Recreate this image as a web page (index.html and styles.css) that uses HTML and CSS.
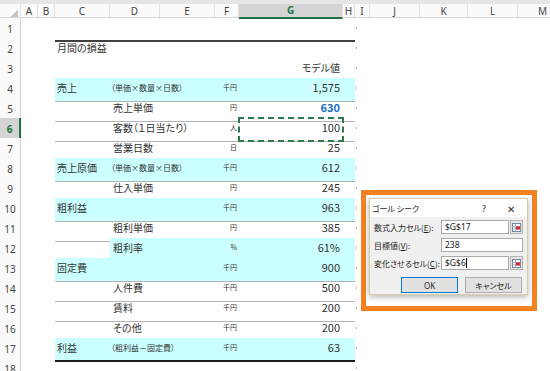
FILE: index.html
```html
<!DOCTYPE html>
<html>
<head>
  <meta charset="UTF-8" />
  <title>月間の損益 - ゴール シーク</title>
  <link rel="stylesheet" href="styles.css">
</head>
<body>
  <div class="topbar"></div>

  <!-- column headers -->
  <div class="colhead">
    <div class="corner"></div>
    <div>A</div><div>B</div><div>C</div><div>D</div><div>E</div><div>F</div>
    <div class="sel">G</div><div>H</div><div>I</div><div>J</div><div>K</div><div>L</div><div>M</div>
  </div>

  <div class="sheet">
    <div class="r"><div class="rh">1</div><div></div><div class="band rule"></div><div class="pb"></div></div>
    <div class="r"><div class="rh">2</div><div></div>
      <div class="band"><span class="c">月間の損益</span></div><div class="pb"></div></div>
    <div class="r"><div class="rh">3</div><div></div>
      <div class="band"><span class="c"></span><span class="d"></span><span class="f"></span><span class="g label">モデル値</span></div><div class="pb"></div></div>
    <div class="r"><div class="rh">4</div><div></div>
      <div class="band cyan line"><span class="c">売上</span><span class="d note">（単価×数量×日数）</span><span class="f">千円</span><span class="g">1,575</span></div><div class="pb"></div></div>
    <div class="r"><div class="rh">5</div><div></div>
      <div class="band line"><span class="c"></span><span class="d">売上単価</span><span class="f">円</span><span class="g input">630</span></div><div class="pb"></div></div>
    <div class="r"><div class="rh on">6</div><div></div>
      <div class="band line"><span class="c"></span><span class="d">客数（１日当たり）</span><span class="f">人</span><span class="g ants">100</span></div><div class="pb"></div></div>
    <div class="r"><div class="rh">7</div><div></div>
      <div class="band line"><span class="c"></span><span class="d">営業日数</span><span class="f">日</span><span class="g">25</span></div><div class="pb"></div></div>
    <div class="r"><div class="rh">8</div><div></div>
      <div class="band cyan line"><span class="c">売上原価</span><span class="d note">（単価×数量×日数）</span><span class="f">千円</span><span class="g">612</span></div><div class="pb"></div></div>
    <div class="r"><div class="rh">9</div><div></div>
      <div class="band line"><span class="c"></span><span class="d">仕入単価</span><span class="f">円</span><span class="g">245</span></div><div class="pb"></div></div>
    <div class="r"><div class="rh">10</div><div></div>
      <div class="band cyan line"><span class="c">粗利益</span><span class="d"></span><span class="f">千円</span><span class="g">963</span></div><div class="pb"></div></div>
    <div class="r"><div class="rh">11</div><div></div>
      <div class="band line"><span class="c"></span><span class="d">粗利単価</span><span class="f">円</span><span class="g">385</span></div><div class="pb"></div></div>
    <div class="r"><div class="rh">12</div><div></div>
      <div class="band cyan-d line"><span class="c"></span><span class="d">粗利率</span><span class="f">%</span><span class="g">61%</span></div><div class="pb"></div></div>
    <div class="r"><div class="rh">13</div><div></div>
      <div class="band cyan line"><span class="c">固定費</span><span class="d"></span><span class="f">千円</span><span class="g">900</span></div><div class="pb"></div></div>
    <div class="r"><div class="rh">14</div><div></div>
      <div class="band line"><span class="c"></span><span class="d">人件費</span><span class="f">千円</span><span class="g">500</span></div><div class="pb"></div></div>
    <div class="r"><div class="rh">15</div><div></div>
      <div class="band line"><span class="c"></span><span class="d">賃料</span><span class="f">千円</span><span class="g">200</span></div><div class="pb"></div></div>
    <div class="r"><div class="rh">16</div><div></div>
      <div class="band line"><span class="c"></span><span class="d">その他</span><span class="f">千円</span><span class="g">200</span></div><div class="pb"></div></div>
    <div class="r"><div class="rh">17</div><div></div>
      <div class="band cyan total"><span class="c">利益</span><span class="d note">（粗利益－固定費）</span><span class="f">千円</span><span class="g">63</span></div><div class="pb"></div></div>
    <div class="r"><div class="rh">18</div><div></div><div class="band"></div><div class="pb"></div></div>
  </div>

  <!-- goal seek dialog, highlighted -->
  <div class="callout">
    <div class="dialog">
      <div class="dlg-title">
        <span>ゴール シーク</span>
        <span class="q">?</span>
        <span class="x">✕</span>
      </div>
      <div class="dlg-body">
        <div class="fields">
          <label>数式入力セル(<u>E</u>):</label>
          <div class="box">$G$17</div>
          <div class="pick">
            <svg width="9" height="9" viewBox="0 0 9 9">
              <rect x="0.5" y="0.5" width="8" height="8" fill="#fff" stroke="#6f86a8"/>
              <path d="M0.5 3.5H8.5M0.5 6H8.5M3.5 0.5V8.5" stroke="#9fb0c8" stroke-width="1"/>
              <rect x="4" y="3.5" width="4" height="3" fill="#d8262a"/>
            </svg>
          </div>

          <label>目標値(<u>V</u>):</label>
          <div class="box wide">238</div>

          <label>変化させるセル(<u>C</u>):</label>
          <div class="box">$G$6<span class="caret"></span></div>
          <div class="pick">
            <svg width="9" height="9" viewBox="0 0 9 9">
              <rect x="0.5" y="0.5" width="8" height="8" fill="#fff" stroke="#6f86a8"/>
              <path d="M0.5 3.5H8.5M0.5 6H8.5M3.5 0.5V8.5" stroke="#9fb0c8" stroke-width="1"/>
              <rect x="4" y="3.5" width="4" height="3" fill="#d8262a"/>
            </svg>
          </div>
        </div>
        <div class="buttons">
          <button class="btn default">OK</button>
          <button class="btn">キャンセル</button>
        </div>
      </div>
    </div>
  </div>
</body>
</html>
```

FILE: styles.css
```css
* {
  box-sizing: border-box;
}
body {
  margin: 0;
  width: 550px;
  height: 371px;
  overflow: hidden;
  position: relative;
  background: #fff;
  color: #333;
  font-family: "Noto Sans CJK JP", "Noto Sans", sans-serif;
  font-feature-settings: "palt";
}
.topbar {
  height: 4px;
  background: #e6e6e6;
}

/* column headers */
.colhead {
  display: grid;
  grid-template-columns: 21px 17px 17px 55px 50px 55px 24px 104px 12px 15px 50px 48px 50px 50px;
  height: 14px;
  border-bottom: 1px solid #d5d5d5;
  background: #fafafa;
  font-family: "Noto Sans", sans-serif;
  font-size: 10px;
  color: #444;
}
.colhead div {
  border-right: 1px solid #e1e1e1;
  text-align: center;
  line-height: 15px;
}
.colhead .corner {
  background: linear-gradient(to bottom right, transparent 52%, #c4c4c4 52%) no-repeat right 2px bottom 2px / 8px 8px;
}
.colhead .sel {
  background: #d4d4d4;
  color: #217346;
  font-weight: bold;
  border-bottom: 2px solid #217346;
  line-height: 13px;
}

/* sheet rows */
.r {
  display: grid;
  grid-template-columns: 21px 34px 300px 1fr;
  height: 20px;
}
.rh {
  border-right: 1px solid #d5d5d5;
  border-bottom: 1px solid #e8e8e8;
  background: #fafafa;
  text-align: center;
  font-family: "Noto Sans", sans-serif;
  font-size: 10px;
  line-height: 23px;
  color: #444;
}
.rh.on {
  background: #d4d4d4;
  color: #217346;
  font-weight: bold;
  border-right: 2px solid #217346;
}
.pb {
  background: linear-gradient(#b0b0b0, #b0b0b0) no-repeat 1px 9px / 1px 2px;
}

.band {
  display: grid;
  grid-template-columns: 55px 105px 24px 104px 12px;
  white-space: nowrap;
  font-size: 10px;
  line-height: 19px;
}
.band.line {
  border-bottom: 1px solid #b4b4b4;
}
.band.cyan {
  background: #ccffff;
}
.band.cyan-d {
  background: linear-gradient(to right, transparent 55px, #ccffff 55px);
}
.band.rule {
  border-bottom: 2px solid #404040;
}
.band.total {
  border-bottom: 2px solid #1a1a1a;
}
.c {
  padding-left: 2px;
}
.d {
  padding-left: 3px;
}
.note {
  font-size: 8px;
  padding-left: 1px;
}
.f {
  text-align: right;
  padding-right: 2px;
  font-size: 7px;
}
.g {
  text-align: right;
  padding-right: 3px;
  font-size: 11px;
}
.g.label {
  font-size: 10px;
}
.g.input {
  color: #1470c8;
  font-weight: bold;
}
.g.ants {
  outline: 2px dashed #2b7a4b;
  outline-offset: -1px;
}

/* goal seek dialog */
.callout {
  position: absolute;
  left: 361px;
  top: 190px;
  width: 176px;
  height: 121px;
  border: 5px solid #f58220;
  background: #fff;
  padding: 3px 0 0 3px;
}
.dialog {
  width: 159px;
  height: 97px;
  border: 1px solid #d6cca6;
  background: #f0f0f0;
  box-shadow: 0 2px 6px rgba(0, 0, 0, 0.3);
  font-size: 8px;
  color: #1e1e1e;
}
.dlg-title {
  height: 18px;
  background: #fff;
  display: flex;
  align-items: center;
  padding-left: 2px;
}
.dlg-title .q {
  margin-left: auto;
  width: 22px;
  text-align: center;
  font-family: "Noto Sans", sans-serif;
  font-size: 9px;
}
.dlg-title .x {
  width: 32px;
  text-align: center;
  font-size: 10px;
  color: #333;
}
.dlg-body {
  padding: 3px 5px 0 4px;
}
.fields {
  display: grid;
  grid-template-columns: 66px 68px 13px;
  column-gap: 1px;
  row-gap: 4px;
  align-items: center;
}
.fields label {
  white-space: nowrap;
}
.box {
  height: 14px;
  border: 1px solid #a8a8a8;
  background: #fff;
  padding-left: 3px;
  font-family: "Noto Sans", sans-serif;
  font-size: 8.5px;
  line-height: 12px;
  color: #222;
  display: flex;
  align-items: center;
}
.box.wide {
  grid-column: span 2;
}
.caret {
  display: inline-block;
  width: 1px;
  height: 10px;
  background: #000;
}
.pick {
  height: 14px;
  border: 1px solid #b4b4b4;
  background: #e6e6e6;
  display: flex;
  align-items: center;
  justify-content: center;
}
.pick svg {
  display: block;
}
.buttons {
  display: flex;
  justify-content: flex-end;
  gap: 7px;
  margin-top: 7px;
}
.btn {
  width: 57px;
  height: 16px;
  padding: 0;
  border: 1px solid #adadad;
  background: #e1e1e1;
  font-family: "Noto Sans CJK JP", "Noto Sans", sans-serif;
  font-feature-settings: "palt";
  font-size: 8px;
  color: #1e1e1e;
}
.btn.default {
  border-color: #0078d7;
  font-family: "Noto Sans", sans-serif;
}
```
